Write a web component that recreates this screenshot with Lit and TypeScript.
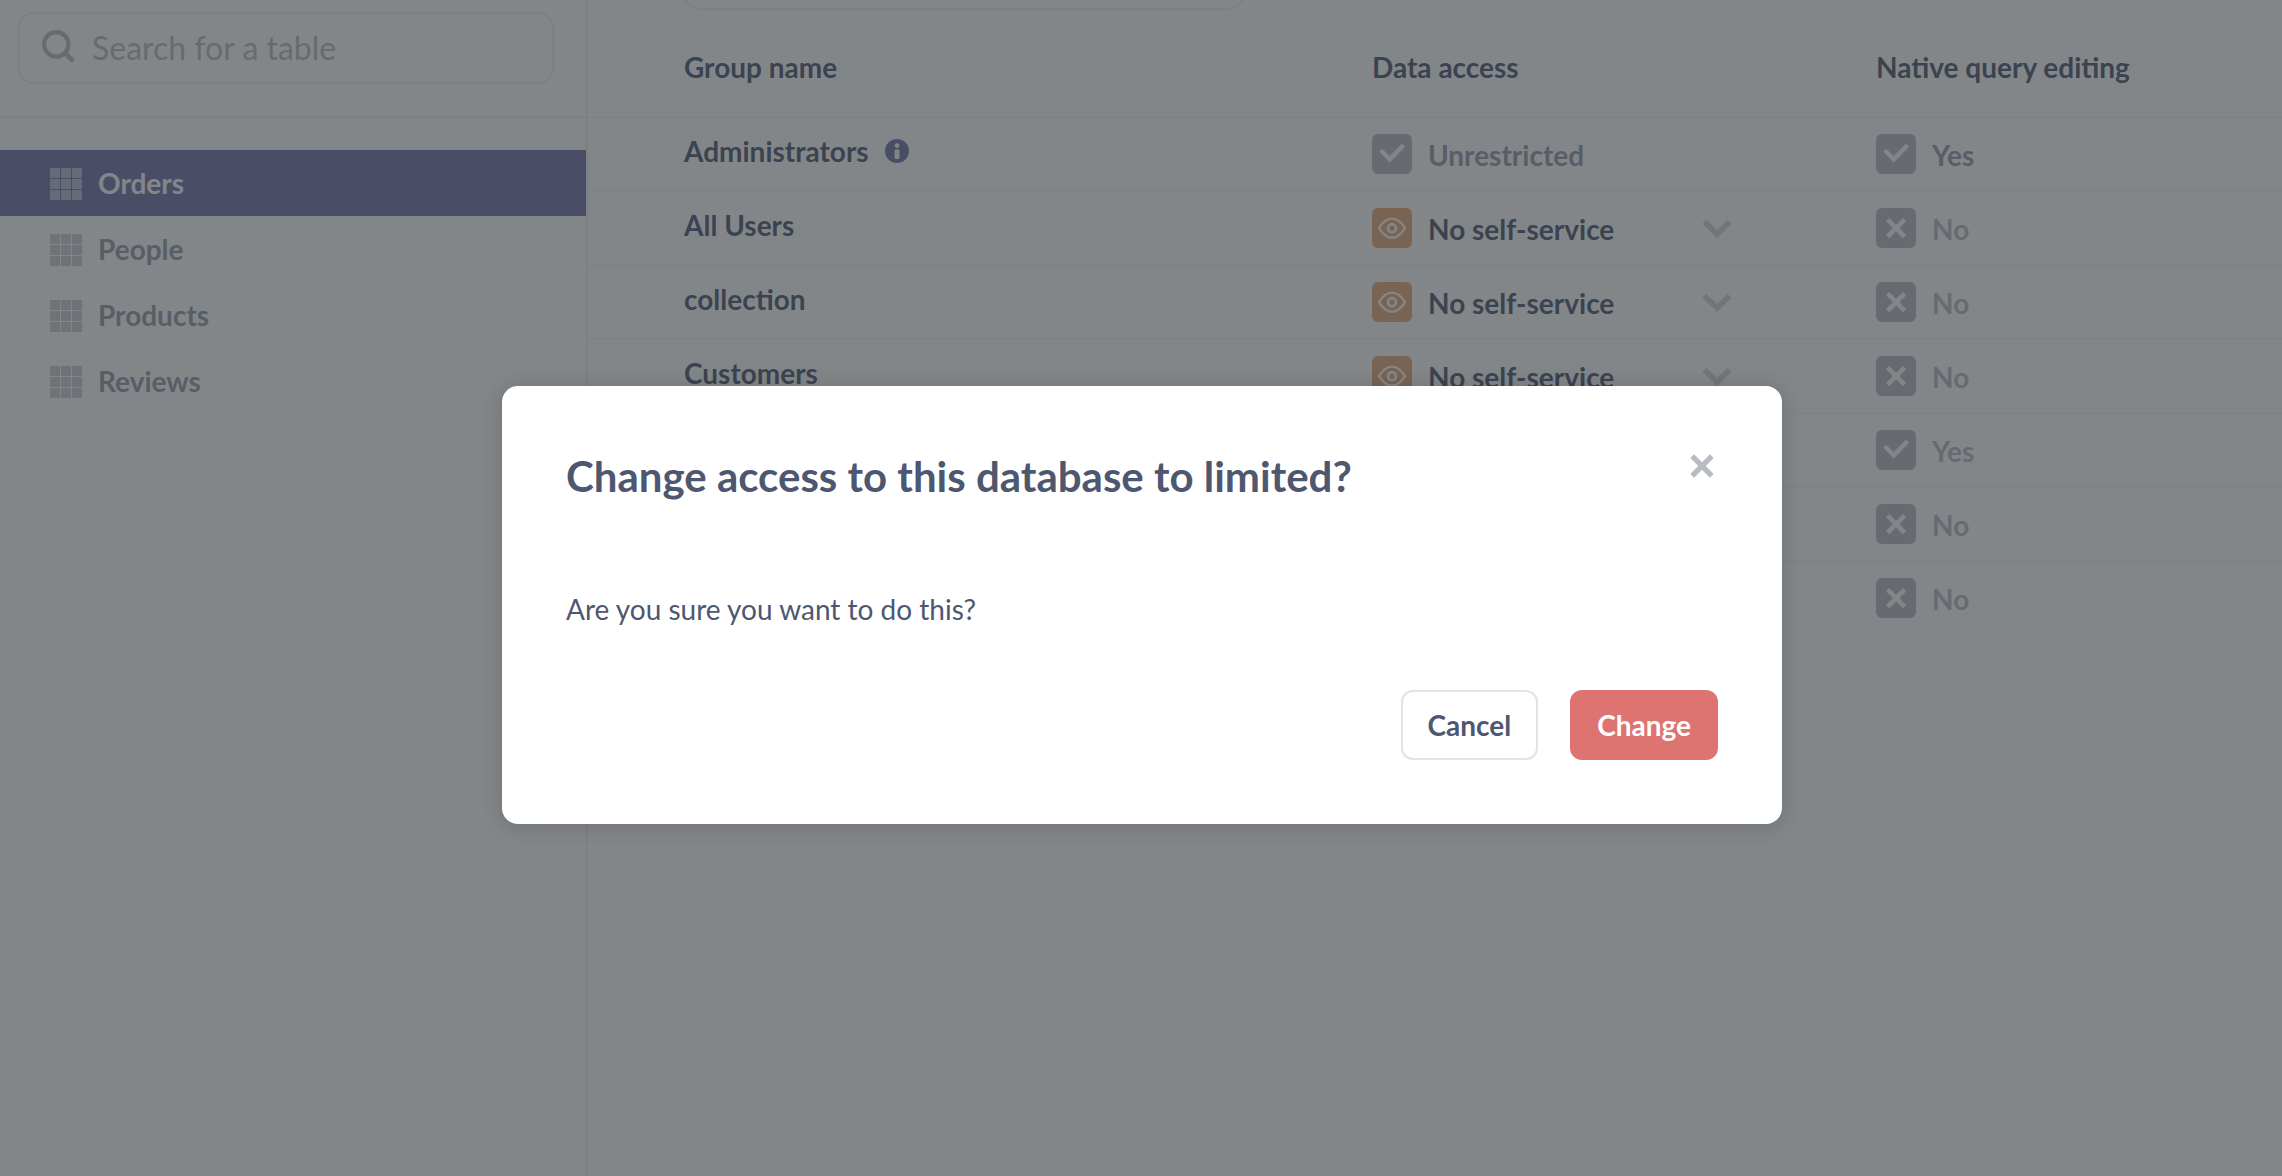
import { LitElement, html, svg, css, nothing } from "lit";
import { customElement, state } from "lit/decorators.js";

type Access = "unrestricted" | "blocked";

interface GroupRow {
  name?: string;
  access?: Access;
  native: boolean;
  strong?: boolean;
}

const TABLES = ["Orders", "People", "Products", "Reviews"];

const GROUPS: GroupRow[] = [
  { name: "Administrators", access: "unrestricted", native: true, strong: true },
  { name: "All Users", access: "blocked", native: false },
  { name: "collection", access: "blocked", native: false },
  { name: "Customers", access: "blocked", native: false },
  { native: true },
  { native: false },
  { native: false },
];

const searchIcon = html`<svg class="icon-32" viewBox="0 0 32 32" fill="none" stroke="currentColor" aria-hidden="true">
  <circle cx="14.3" cy="14.3" r="12.2" stroke-width="4.2"></circle>
  <path d="M23.5 23.5 29.6 29.6" stroke-width="4.8" stroke-linecap="round"></path>
</svg>`;

const gridIcon = html`<svg class="icon-32 grid" viewBox="0 0 32 32" fill="currentColor" aria-hidden="true">
  ${[0, 11, 22].map((y) => [0, 11, 22].map((x) => svg`<rect x=${x} y=${y} width="10" height="10"></rect>`))}
</svg>`;

const infoIcon = html`<svg class="info" viewBox="0 0 24 24" aria-hidden="true">
  <circle cx="12" cy="12" r="12" fill="currentColor"></circle>
  <circle cx="12" cy="6.6" r="2.3" fill="#fff"></circle>
  <rect x="9.6" y="10.4" width="4.8" height="9.6" rx="1" fill="#fff"></rect>
</svg>`;

const checkGlyph = svg`<path fill="#fff" d="M7.4 17.7 10.4 14.7 17.7 22 30 9.7 33 12.8 17.7 28.6Z"></path>`;
const crossGlyph = svg`<path stroke="#fff" stroke-width="4.6" d="M11.6 11.6 28.6 28.6M28.6 11.6 11.6 28.6"></path>`;
const eyeGlyph = svg`<g fill="none" stroke="#fff">
  <path stroke-width="2.4" stroke-linejoin="round" d="M7 20.2C10.4 14.6 14.7 10.6 20 10.6S29.6 14.6 33 20.2C29.6 25.8 25.3 29.8 20 29.8S10.4 25.8 7 20.2Z"></path>
  <circle cx="20" cy="20.2" r="4" stroke-width="2.8"></circle>
</g>`;

const chevron = html`<svg class="chevron" viewBox="0 0 30 20" aria-hidden="true">
  <path fill="currentColor" d="M.4 4.7 4.4.7 15 11 25.6.7 29.6 4.7 15 19Z"></path>
</svg>`;

const box = (kind: string, glyph: unknown) =>
  html`<svg class="box ${kind}" viewBox="0 0 40 40" aria-hidden="true">${glyph}</svg>`;

@customElement("app-root")
export class AppRoot extends LitElement {
  @state() private selected = "Orders";
  @state() private open = true;

  static styles = css`
    :host {
      --dark: #4e5770;
      --medium: #959aa9;
      --light: #b9bbc3;
      --brand: #7272a8;
      --border: #f0f0f0;
      display: flex;
      position: relative;
      height: 100vh;
      overflow: hidden;
      background: #fff;
      color: var(--dark);
      font: 700 28px/32px Lato, sans-serif;
    }
    * { box-sizing: border-box; }
    button, input { font: inherit; color: inherit; margin: 0; }
    svg { display: block; flex: none; }
    .icon-32 { width: 32px; height: 32px; }

    .sidebar {
      flex: none;
      width: 588px;
      border-right: 2px solid var(--border);
    }
    .search-area {
      padding: 12px 32px 32px 18px;
      border-bottom: 2px solid var(--border);
    }
    .search {
      display: flex;
      align-items: flex-start;
      gap: 18px;
      height: 72px;
      padding: 16px 22px;
      border: 2px solid var(--border);
      border-radius: 16px;
      color: var(--light);
    }
    .search input {
      flex: 1;
      min-width: 0;
      height: 36px;
      padding: 0;
      border: 0;
      outline: 0;
      background: none;
      font-size: 32px;
      font-weight: 400;
      line-height: 36px;
    }
    .search input::placeholder { color: var(--light); opacity: 1; }
    .tables { list-style: none; margin: 0; padding: 32px 0 0; }
    .table-link {
      display: flex;
      align-items: flex-start;
      gap: 16px;
      height: 66px;
      padding: 18px 50px 0;
      color: var(--medium);
      line-height: 30px;
      text-decoration: none;
    }
    .grid { color: var(--light); opacity: 0.7; }
    .table-link.active { background: var(--brand); color: #fff; }
    .active .grid { color: #fff; opacity: 0.5; }

    .main { flex: 1; min-width: 0; }
    .filter {
      display: block;
      width: 560px;
      height: 72px;
      margin: -62px 0 0 96px;
      padding: 0 22px;
      border: 2px solid var(--border);
      border-radius: 16px;
      background: none;
    }
    table { width: 100%; border-collapse: separate; border-spacing: 0; table-layout: fixed; }
    .col-access { width: 504px; }
    .col-native { width: 438px; }
    th, td {
      padding: 0 32px;
      border-bottom: 2px solid #f7f7f7;
      font-weight: 700;
      text-align: left;
      vertical-align: top;
    }
    thead th { padding-top: 41px; padding-bottom: 33px; }
    tr > :first-child { padding-left: 96px; }
    tbody tr:last-child > * { border-bottom: 0; }
    tbody th { padding-top: 17px; }
    tbody td { padding-top: 16px; padding-bottom: 16px; }
    .name { display: flex; align-items: center; gap: 16px; }
    .info { width: 24px; height: 24px; color: var(--brand); }
    .cell {
      display: flex;
      align-items: flex-start;
      gap: 16px;
      width: 100%;
      height: 40px;
      padding: 0;
      border: 0;
      background: none;
      text-align: left;
    }
    .label { flex: 1; padding-top: 5px; }
    .box { width: 40px; height: 40px; border-radius: 6px; background: var(--light); }
    .box.eye { background: #e6ab78; }
    .is-light { color: var(--light); }
    .is-medium { color: var(--medium); }
    .access { width: 360px; }
    .chevron { width: 30px; height: 20px; margin-top: 11px; color: #d3d5da; }

    .backdrop {
      position: absolute;
      inset: 0;
      display: flex;
      align-items: center;
      justify-content: center;
      padding: 34px 0 0 2px;
      background: rgba(48, 53, 58, 0.6);
    }
    .modal {
      width: 1280px;
      max-width: 90%;
      padding: 64px;
      border-radius: 16px;
      background: #fff;
      box-shadow: 0 2px 20px rgba(0, 0, 0, 0.16);
    }
    .modal-head { display: flex; align-items: flex-start; justify-content: space-between; }
    h2 { margin: 0; font-size: 42px; line-height: 52px; }
    .close { padding: 0; border: 0; background: none; color: var(--light); cursor: pointer; }
    .message { margin: 90px 0 64px; font-weight: 400; line-height: 34px; }
    .actions { display: flex; justify-content: flex-end; gap: 32px; }
    .btn {
      padding: 16px 25px;
      border: 2px solid #e3e3e3;
      border-radius: 12px;
      background: #fff;
      line-height: 34px;
      cursor: pointer;
    }
    .btn.danger { border-color: #dd7471; background: #dd7471; color: #fff; }
  `;

  private renderAccess(access?: Access) {
    if (access === "unrestricted") {
      return html`<div class="cell access is-medium">${box("check", checkGlyph)}<span class="label">Unrestricted</span></div>`;
    }
    if (access === "blocked") {
      return html`<button class="cell access" type="button">
        ${box("eye", eyeGlyph)}<span class="label">No self-service</span>${chevron}
      </button>`;
    }
    return nothing;
  }

  private renderRow(row: GroupRow) {
    return html`<tr>
      <th scope="row">
        <div class="name">${row.name}${row.strong ? infoIcon : nothing}</div>
      </th>
      <td>${this.renderAccess(row.access)}</td>
      <td>
        <div class="cell ${row.strong ? "is-medium" : "is-light"}">
          ${box("flag", row.native ? checkGlyph : crossGlyph)}
          <span class="label">${row.native ? "Yes" : "No"}</span>
        </div>
      </td>
    </tr>`;
  }

  private renderModal() {
    const close = () => (this.open = false);
    return html`<div class="backdrop">
      <div class="modal" role="dialog" aria-modal="true" aria-labelledby="title">
        <div class="modal-head">
          <h2 id="title">Change access to this database to limited?</h2>
          <button class="close" type="button" aria-label="Close" @click=${close}>
            <svg class="icon-32" viewBox="0 0 32 32" aria-hidden="true">
              <path stroke="currentColor" stroke-width="5.4" d="M6.2 6.2 25.8 25.8M25.8 6.2 6.2 25.8"></path>
            </svg>
          </button>
        </div>
        <p class="message">Are you sure you want to do this?</p>
        <div class="actions">
          <button class="btn" type="button" @click=${close}>Cancel</button>
          <button class="btn danger" type="button" @click=${close}>Change</button>
        </div>
      </div>
    </div>`;
  }

  render() {
    return html`
      <aside class="sidebar">
        <div class="search-area">
          <label class="search">
            ${searchIcon}
            <input type="text" placeholder="Search for a table" aria-label="Search for a table" />
          </label>
        </div>
        <ul class="tables">
          ${TABLES.map(
            (name) => html`<li>
              <a
                class="table-link ${name === this.selected ? "active" : ""}"
                href="#${name.toLowerCase()}"
                @click=${() => (this.selected = name)}
                >${gridIcon}<span>${name}</span></a
              >
            </li>`
          )}
        </ul>
      </aside>
      <main class="main">
        <input class="filter" type="text" aria-label="Group name" />
        <table>
          <colgroup>
            <col />
            <col class="col-access" />
            <col class="col-native" />
          </colgroup>
          <thead>
            <tr>
              <th scope="col">Group name</th>
              <th scope="col">Data access</th>
              <th scope="col">Native query editing</th>
            </tr>
          </thead>
          <tbody>
            ${GROUPS.map((row) => this.renderRow(row))}
          </tbody>
        </table>
      </main>
      ${this.open ? this.renderModal() : nothing}
    `;
  }
}
